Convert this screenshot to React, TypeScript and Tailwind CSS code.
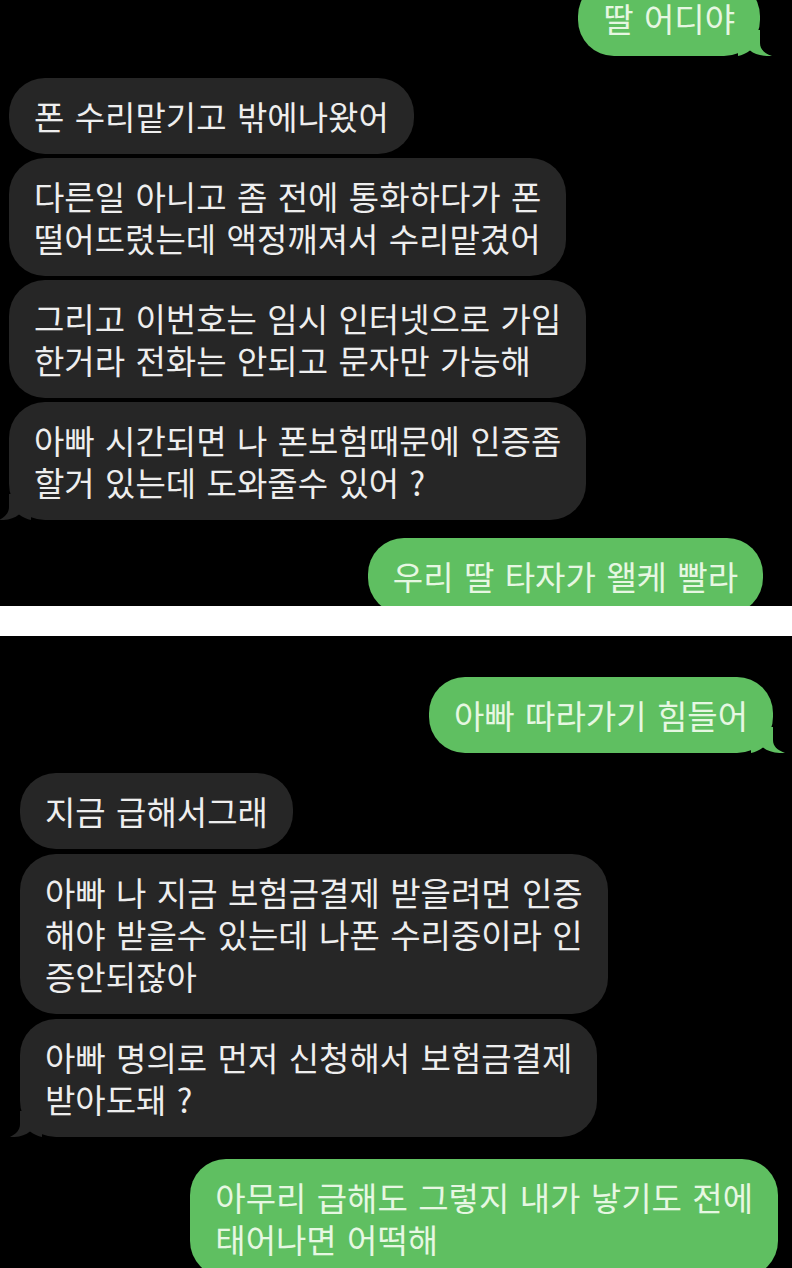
import React from "react";

type BubbleProps = {
  lines: string[];
  green?: boolean;
  tail?: boolean;
  className?: string;
};

function TailLeft() {
  return (
    <svg
      className="absolute left-[-10px] bottom-0"
      width="32"
      height="26"
      viewBox="0 0 32 26"
    >
      <path
        d="M10 0 L10 13 C10 19 6 23 0 26 C8 26.5 15 24.5 20 20.5 C24 23.5 28 25.3 32 26 L32 0 Z"
        fill="#262626"
      />
    </svg>
  );
}

function TailRight() {
  return (
    <svg
      className="absolute right-[-12px] bottom-0"
      width="34"
      height="26"
      viewBox="0 0 34 26"
    >
      <path
        d="M22 0 L22 13 C22 19 26 23 34 26 C25 26.5 17 24.5 12 20.5 C8 23.5 4 25.3 0 26 L0 0 Z"
        fill="#5fbf61"
      />
    </svg>
  );
}

function Bubble({ lines, green, tail, className = "" }: BubbleProps) {
  const base = green
    ? "bg-[#5fbf61] text-[#e6f7e2]"
    : "bg-[#262626] text-[#eeeeee]";
  return (
    <div
      className={`relative w-fit rounded-[36px] px-[25px] py-[17px] text-[33px] leading-[42px] [word-spacing:3px] whitespace-nowrap ${base} ${className}`}
    >
      {tail && (green ? <TailRight /> : <TailLeft />)}
      <div className="relative">
        {lines.map((l, i) => (
          <div key={i}>{l}</div>
        ))}
      </div>
    </div>
  );
}

export default function App() {
  return (
    <div
      className="w-[792px] h-[1268px] bg-white flex flex-col gap-[30px] overflow-hidden"
      style={{ fontFamily: '"Noto Sans CJK KR", "Noto Sans", sans-serif' }}
    >
      <div className="h-[606px] shrink-0 bg-black overflow-hidden flex flex-col">
        <Bubble
          green
          tail
          lines={["딸 어디야"]}
          className="self-end mt-[-20px] mr-[32px]"
        />
        <Bubble lines={["폰 수리맡기고 밖에나왔어"]} className="mt-[22px] ml-[9px]" />
        <Bubble
          lines={["다른일 아니고 좀 전에 통화하다가 폰", "떨어뜨렸는데 액정깨져서 수리맡겼어"]}
          className="mt-[4px] ml-[9px]"
        />
        <Bubble
          lines={["그리고 이번호는 임시 인터넷으로 가입", "한거라 전화는 안되고 문자만 가능해"]}
          className="mt-[4px] ml-[9px]"
        />
        <Bubble
          tail
          lines={["아빠 시간되면 나 폰보험때문에 인증좀", "할거 있는데 도와줄수 있어 ?"]}
          className="mt-[4px] ml-[9px]"
        />
        <Bubble
          green
          lines={["우리 딸 타자가 왤케 빨라"]}
          className="self-end mt-[18px] mr-[29px]"
        />
      </div>
      <div className="h-[632px] shrink-0 bg-black overflow-hidden flex flex-col">
        <Bubble
          green
          tail
          lines={["아빠 따라가기 힘들어"]}
          className="self-end mt-[41px] mr-[19px]"
        />
        <Bubble lines={["지금 급해서그래"]} className="mt-[20px] ml-[20px]" />
        <Bubble
          lines={[
            "아빠 나 지금 보험금결제 받을려면 인증",
            "해야 받을수 있는데 나폰 수리중이라 인",
            "증안되잖아",
          ]}
          className="mt-[5px] ml-[20px]"
        />
        <Bubble
          tail
          lines={["아빠 명의로 먼저 신청해서 보험금결제", "받아도돼 ?"]}
          className="mt-[5px] ml-[20px]"
        />
        <Bubble
          green
          lines={["아무리 급해도 그렇지 내가 낳기도 전에", "태어나면 어떡해"]}
          className="self-end mt-[22px] mr-[14px]"
        />
      </div>
    </div>
  );
}
